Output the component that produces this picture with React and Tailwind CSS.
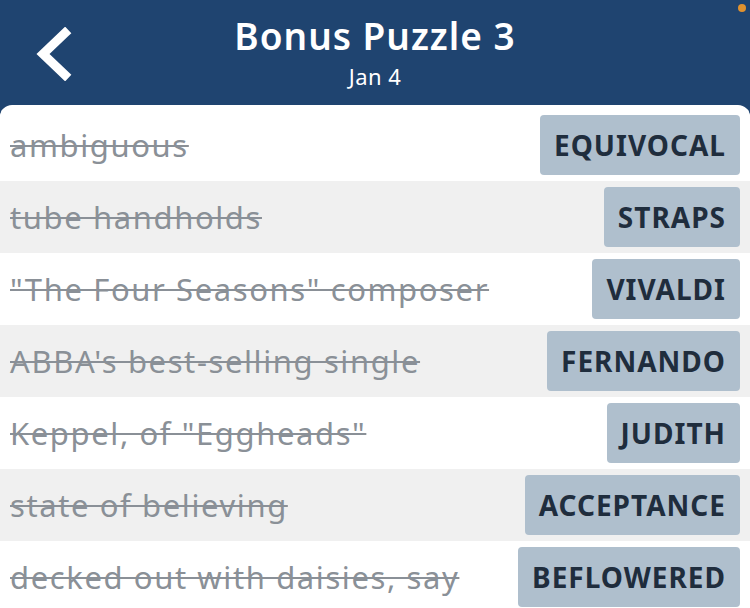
import React from "react";

const clues = [
  { clue: "ambiguous", answer: "EQUIVOCAL" },
  { clue: "tube handholds", answer: "STRAPS" },
  { clue: '"The Four Seasons" composer', answer: "VIVALDI" },
  { clue: "ABBA's best-selling single", answer: "FERNANDO" },
  { clue: 'Keppel, of "Eggheads"', answer: "JUDITH" },
  { clue: "state of believing", answer: "ACCEPTANCE" },
  { clue: "decked out with daisies, say", answer: "BEFLOWERED" },
];

export default function App() {
  return (
    <div
      className="w-[750px] h-[608px] overflow-hidden bg-[#1f4470] flex flex-col"
      style={{ fontFamily: '"Noto Sans", "Open Sans", sans-serif' }}
    >
      {/* Header */}
      <div className="relative h-[105px] shrink-0 flex flex-col items-center text-white">
        <div className="absolute left-[32px] top-[27px]">
          <svg width="42" height="54" viewBox="0 0 42 54">
            <path d="M33 6 L11 27 L33 48" fill="none" stroke="white" strokeWidth="9" strokeLinecap="square" />
          </svg>
        </div>
        <span className="absolute right-[4px] top-[4px] w-[8px] h-[8px] rounded-full bg-[#e0922f]" />
        <h1 className="mt-[12px] text-[37px] leading-[48px] font-semibold tracking-[1px]">Bonus Puzzle 3</h1>
        <p className="mt-[2px] text-[22px] leading-[28px] tracking-[0.5px]">Jan 4</p>
      </div>

      {/* Clue list */}
      <div className="flex-1 bg-white rounded-t-[12px] pt-[4px] overflow-hidden">
        {clues.map((c, i) => (
          <div
            key={i}
            className={`h-[72px] flex items-center justify-between pl-[10px] pr-[10px] ${
              i % 2 === 1 ? "bg-[#f0f0f0]" : "bg-white"
            }`}
          >
            <span className="text-[31px] tracking-[1.6px] text-[#8a9097] line-through decoration-[2px]">{c.clue}</span>
            <span className="h-[60px] flex items-center px-[14px] rounded-[4px] bg-[#afbfcd] text-[#1f2d3d] text-[28px] tracking-[1px] font-bold">
              {c.answer}
            </span>
          </div>
        ))}
      </div>
    </div>
  );
}
